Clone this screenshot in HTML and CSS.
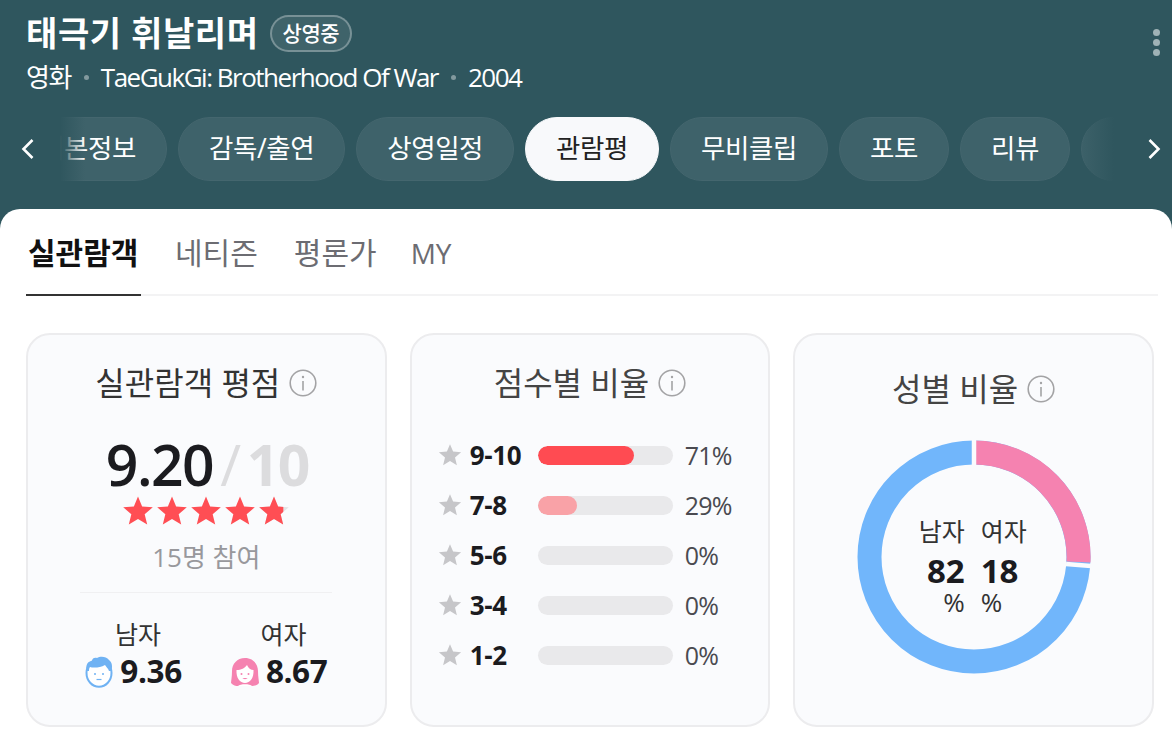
FILE: index.html
```html
<!DOCTYPE html>
<html lang="ko">
<head>
<meta charset="utf-8">
<title>태극기 휘날리며</title>
<link rel="stylesheet" href="styles.css">
</head>
<body>
<svg class="defs" width="0" height="0" aria-hidden="true">
  <defs>
    <path id="star" d="M12 1.2l3.1 7.4 8 .6-6.1 5.2 1.9 7.8L12 18l-6.9 4.2L7 14.4.9 9.2l8-.6z"/>
    <g id="info">
      <circle cx="14" cy="14" r="12.8" fill="none" stroke="#a3a3a5" stroke-width="1.6"/>
      <rect x="13.2" y="12" width="1.6" height="9.500" fill="#a3a3a5"/>
      <circle cx="14" cy="8" r="1.200" fill="#a3a3a5"/>
    </g>
  </defs>
</svg>
<header class="hero">
  <div class="hero-top">
    <div>
      <div class="title-row">
        <h1 class="title">태극기 휘날리며</h1>
        <span class="badge">상영중</span>
      </div>
      <p class="meta">영화<i class="dot"></i>TaeGukGi: Brotherhood Of War<i class="dot"></i>2004</p>
    </div>
    <div class="kebab"><i></i><i></i><i></i></div>
  </div>
  <nav class="pills-row">
    <svg class="chev" width="16" height="24" viewBox="0 0 16 24"><path d="M12.500 3l-9 9 9 9" fill="none" stroke="#fff" stroke-width="2.600"/></svg>
    <div class="pills">
      <a class="pill pill-first">기본정보</a>
      <a class="pill">감독/출연</a>
      <a class="pill">상영일정</a>
      <a class="pill pill-active">관람평</a>
      <a class="pill">무비클립</a>
      <a class="pill">포토</a>
      <a class="pill">리뷰</a>
      <a class="pill">명대사</a>
      <span class="fade fade-left"></span>
      <span class="fade fade-right"></span>
    </div>
    <svg class="chev chev-next" width="16" height="24" viewBox="0 0 16 24"><path d="M3.500 3l9 9-9 9" fill="none" stroke="#fff" stroke-width="2.600"/></svg>
  </nav>
</header>
<main class="panel">
  <div class="tabs">
    <a class="tab tab-active">실관람객</a>
    <a class="tab">네티즌</a>
    <a class="tab">평론가</a>
    <a class="tab tab-latin">MY</a>
  </div>
  <section class="cards">
    <article class="card">
      <h2 class="card-title">실관람객 평점<svg class="info" width="28" height="28" viewBox="0 0 28 28"><use href="#info"/></svg></h2>
      <div class="score"><b>9.20</b><span class="score-slash">/</span><span class="score-max">10</span></div>
      <div class="stars">
        <svg width="32" height="32" viewBox="0 0 24 24"><use href="#star"/></svg>
        <svg width="32" height="32" viewBox="0 0 24 24"><use href="#star"/></svg>
        <svg width="32" height="32" viewBox="0 0 24 24"><use href="#star"/></svg>
        <svg width="32" height="32" viewBox="0 0 24 24"><use href="#star"/></svg>
        <svg width="32" height="32" viewBox="0 0 24 24"><use href="#star" class="star-empty"/><svg width="19" height="24"><use href="#star"/></svg></svg>
      </div>
      <p class="count">15명 참여</p>
      <div class="split">
        <div class="split-col">
          <span class="split-label">남자</span>
          <span class="split-val">
            <svg width="30" height="33" viewBox="0 0 30 33">
              <ellipse cx="15" cy="18" rx="12.500" ry="13.800" fill="#fff" stroke="#6fb2f3" stroke-width="2"/>
              <path d="M3 16C1 10 4 6 8 6c0-3 3-4 5-3 3-2 9-2 12 2 3 2 4 7 2 11h-2c-1-3-3-4-4-6-5 3-12 3-15 2-1 1-1 3-1 4z" fill="#6fb2f3"/>
              <circle cx="11" cy="19" r="1" fill="#6fb2f3"/><circle cx="19" cy="19" r="1" fill="#6fb2f3"/>
              <path d="M12.500 24.500h5" stroke="#6fb2f3" stroke-width="1.200"/>
            </svg>9.36
          </span>
        </div>
        <div class="split-col">
          <span class="split-label">여자</span>
          <span class="split-val">
            <svg width="30" height="33" viewBox="0 0 30 33">
              <path d="M15 3c8 0 13 6 13 13 0 6 1 10 1 12-2 2.500-5 3-7 3H8c-2 0-5-.5-7-3 0-2 1-6 1-12C2 9 7 3 15 3z" fill="#f582b0"/>
              <path d="M6.500 15c4.500 0 8.500-2 10.500-5 1 3 4 5 6.500 5 .5 8-3.500 13-8.500 13S6 23 6.500 15z" fill="#fff"/>
              <path d="M8 31c2-2.500 12-2.500 14 0z" fill="#fff"/>
              <circle cx="11.500" cy="19" r="1" fill="#f582b0"/><circle cx="18.500" cy="19" r="1" fill="#f582b0"/>
              <path d="M12.500 23c1 1.500 4 1.500 5 0z" fill="#f582b0"/>
            </svg>8.67
          </span>
        </div>
      </div>
    </article>
    <article class="card">
      <h2 class="card-title card-title-dim">점수별 비율<svg class="info" width="28" height="28" viewBox="0 0 28 28"><use href="#info"/></svg></h2>
      <ul class="bars">
        <li class="bar-row"><svg width="24" height="24" viewBox="0 0 24 24"><use href="#star"/></svg><b class="range">9-10</b><span class="track"><span class="fill fill-hi" style="width:71%"></span></span><span class="pct">71%</span></li>
        <li class="bar-row"><svg width="24" height="24" viewBox="0 0 24 24"><use href="#star"/></svg><b class="range">7-8</b><span class="track"><span class="fill fill-lo" style="width:29%"></span></span><span class="pct">29%</span></li>
        <li class="bar-row"><svg width="24" height="24" viewBox="0 0 24 24"><use href="#star"/></svg><b class="range">5-6</b><span class="track"></span><span class="pct">0%</span></li>
        <li class="bar-row"><svg width="24" height="24" viewBox="0 0 24 24"><use href="#star"/></svg><b class="range">3-4</b><span class="track"></span><span class="pct">0%</span></li>
        <li class="bar-row"><svg width="24" height="24" viewBox="0 0 24 24"><use href="#star"/></svg><b class="range">1-2</b><span class="track"></span><span class="pct">0%</span></li>
      </ul>
    </article>
    <article class="card">
      <h2 class="card-title card-title-dim card-title-low">성별 비율<svg class="info" width="28" height="28" viewBox="0 0 28 28"><use href="#info"/></svg></h2>
      <div class="donut">
        <svg width="234" height="234" viewBox="0 0 234 234">
          <circle cx="117" cy="117" r="104.500" fill="none" stroke="#71b6fb" stroke-width="24"/>
          <path d="M117 12.500A104.500 104.500 0 0 1 221.500 122" fill="none" stroke="#f582b0" stroke-width="24"/>
          <path d="M117 0v25M209 124l25 2" stroke="#fafbfd" stroke-width="4.500" fill="none"/>
        </svg>
        <div class="donut-text">
          <div class="donut-col donut-col-left"><span>남자</span><b>82</b><span class="donut-unit">%</span></div>
          <div class="donut-col donut-col-right"><span>여자</span><b>18</b><span class="donut-unit">%</span></div>
        </div>
      </div>
    </article>
  </section>
</main>
</body>
</html>
```
FILE: styles.css
```css
* { box-sizing: border-box; }
html, body { margin: 0; padding: 0; }
body {
  width: 1172px;
  height: 749px;
  overflow: hidden;
  background: #2f565e;
  font-family: "Open Sans", "Noto Sans CJK KR", sans-serif;
  color: #1b1b1f;
}
.defs { position: absolute; }
.hero { height: 209px; padding: 11px 0 0 26px; color: #fff; }
.hero-top { display: flex; justify-content: space-between; padding-right: 12px; height: 106px; }
.title-row { display: flex; align-items: center; gap: 11px; height: 44px; }
.title { margin: 0; font-size: 34px; font-weight: 700; letter-spacing: .6px; line-height: 44px; }
.badge {
  height: 37px; padding: 0 11px; border-radius: 19px;
  border: 2px solid rgba(255,255,255,.3);
  background: rgba(255,255,255,.08);
  font-size: 21px; font-weight: 500; line-height: 32px; letter-spacing: -.5px;
}
.meta { margin: 2px 0 0; font-size: 26px; line-height: 40px; letter-spacing: -1.5px; display: flex; align-items: center; height: 40px; }
.dot { width: 5px; height: 5px; border-radius: 50%; background: rgba(255,255,255,.4); margin: 0 12px 0 13px; }
.kebab { display: flex; flex-direction: column; gap: 3px; padding-top: 18px; }
.kebab i { display: block; width: 7px; height: 7px; border-radius: 50%; background: #9fb2b6; }
.pills-row { display: flex; align-items: center; height: 64px; margin-left: -26px; padding-left: 20px; }
.chev { flex: none; }
.chev-next { margin-left: 29px; }
.pills {
  position: relative; display: flex; gap: 11px; width: 1082px; margin: 0 0 0 -1px; overflow: hidden;
  flex: none;
}
.pill {
  flex: none; height: 64px; padding: 0 30px; border-radius: 32px;
  background: #3e626a; border: 1px solid #44666e;
  font-size: 26.500px; line-height: 60px; color: #fff; white-space: nowrap;
  letter-spacing: -.4px;
}
.pill-first { margin-left: -26px; }
.pill-active { background: #f8f9fb; border-color: #f8f9fb; color: #222; }
.fade { position: absolute; top: 0; bottom: 0; }
.fade-left { left: 0; width: 50px; background: linear-gradient(90deg, #2f565e 50%, rgba(47,86,94,0)); }
.fade-right { right: 0; width: 40px; background: linear-gradient(270deg, #2f565e 8%, rgba(47,86,94,0)); }
.panel {
  height: 540px; background: #fff; border-radius: 20px 20px 0 0;
  padding: 0 14px 0 26px;
}
.tabs { display: flex; gap: 32px; height: 87px; border-bottom: 2px solid #f3f3f4; }
.tab { height: 87px; padding: 22px 2px 0; font-size: 30px; line-height: 44px; color: #6c6c72; white-space: nowrap; }
.tab-active { width: 115px; color: #111; font-weight: 700; border-bottom: 2px solid #333; }
.tab-latin { font-size: 28px; margin-left: -2px; }
.cards { display: grid; grid-template-columns: repeat(3, 1fr); gap: 23px; margin-top: 37px; width: 1128px; }
.card {
  height: 394px; background: #fafbfd; border: 2px solid #ececee; border-radius: 24px;
  display: flex; flex-direction: column; align-items: center;
}
.card-title {
  margin: 26px 0 0; display: flex; align-items: center; gap: 9px;
  font-size: 32px; font-weight: 400; line-height: 44px; color: #333;
}
.card-title-dim { color: #444; }
.card-title-low { margin-top: 32px; }
.info { flex: none; }
.score { display: flex; align-items: baseline; margin: 28px 0 0 2px; height: 62px; font-size: 57px; line-height: 62px; letter-spacing: -1.5px; }
.score b { font-weight: 600; color: #1b1b1f; }
.score-slash { color: #dcdcde; margin: 0 7px; font-weight: 400; }
.score-max { color: #dcdcde; font-weight: 700; }
.stars { display: flex; height: 32px; align-items: center; gap: 2px; fill: #ff4e54; }
.stars svg { flex: none; }
.star-empty { fill: #e4e4e6; }
.count { margin: 12px 0 0; font-size: 26px; line-height: 36px; color: #98989c; }
.split {
  margin-top: 17px; width: 252px; border-top: 1px solid #f0f0f2;
  display: flex; justify-content: space-between; padding: 23px 5px 0 4px;
}
.split-col { display: flex; flex-direction: column; align-items: center; }
.split-label { font-size: 25px; line-height: 36px; color: #333; padding-left: 10px; }
.split-val { display: flex; align-items: center; gap: 6px; font-size: 31.500px; font-weight: 700; line-height: 38px; letter-spacing: -.4px; color: #1b1b1f; }
.bars { list-style: none; margin: 25px 0 0; padding: 0 0 0 26px; width: 100%; fill: #c6c6c9; }
.bar-row { display: flex; align-items: center; height: 50px; }
.bar-row svg { flex: none; }
.range { width: 68px; margin-left: 8px; font-size: 26px; font-weight: 700; color: #1b1b1f; letter-spacing: -.3px; }
.track { display: block; width: 135px; height: 19px; border-radius: 10px; background: #e9e9eb; overflow: hidden; flex: none; }
.fill { display: block; height: 100%; border-radius: 10px; }
.fill-hi { background: #ff4b52; }
.fill-lo { background: #f9a2a7; }
.pct { margin-left: 12px; font-size: 25px; color: #4a4a50; letter-spacing: -.8px; }
.donut { position: relative; width: 234px; height: 234px; margin-top: 29px; }
.donut-text { position: absolute; inset: 73px 2px 0 0; display: grid; grid-template-columns: 1fr 1fr; gap: 16px; }
.donut-col { display: flex; flex-direction: column; font-size: 25px; line-height: 36px; color: #333; }
.donut-col-left { align-items: flex-end; }
.donut-col-right { align-items: flex-start; }
.donut-col b { font-size: 33px; font-weight: 700; color: #1b1b1f; line-height: 40px; margin-top: 2px; }
.donut-unit { line-height: 22px; font-size: 26px; }
```
